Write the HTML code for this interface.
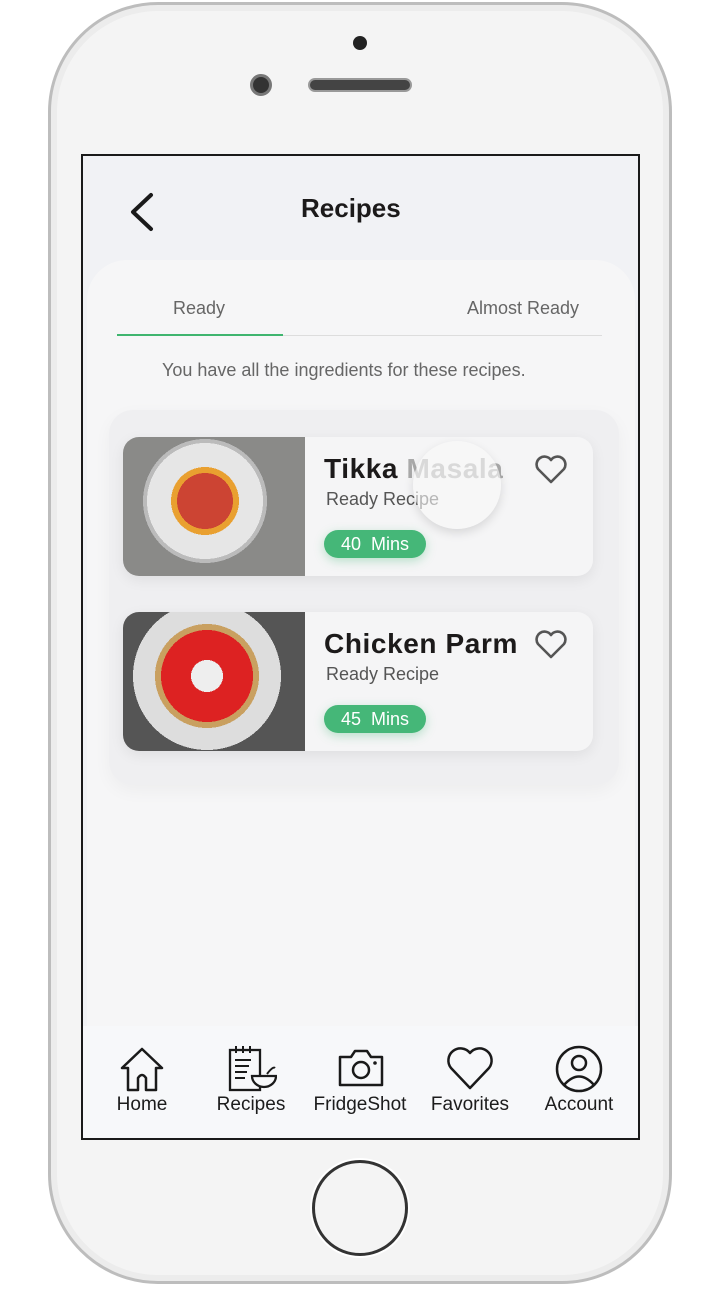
<!DOCTYPE html>
<html><head><meta charset="utf-8"><style>
*{margin:0;padding:0;box-sizing:border-box}
body{width:720px;height:1296px;background:#fff;position:relative;overflow:hidden;font-family:"Liberation Sans",sans-serif}
.phone{position:absolute;left:48px;top:2px;width:624px;height:1282px;border-radius:110px;background:#f4f4f4;border:3px solid #bdbdbd;box-shadow:inset 0 0 0 6px #ececec}
.abs{position:absolute}
.screen{position:absolute;left:81px;top:154px;width:559px;height:986px;border:2.5px solid #1a1a1a;background:#f1f2f5;overflow:hidden}
.panel{position:absolute;left:4px;top:104px;width:548px;height:780px;border-radius:40px 40px 0 0;background:#f6f6f7}
.t{position:absolute;white-space:nowrap}
.card{position:absolute;left:36px;width:470px;height:139px;border-radius:16px;background:#f5f5f6;box-shadow:0 4px 14px rgba(0,0,0,.07);overflow:hidden}
.img{position:absolute;left:0;top:0;width:182px;height:139px}
.title{font-weight:bold;font-size:28px;letter-spacing:0.6px;color:#1c1a1a;left:201px}
.sub{font-size:18px;color:#555;left:203px}
.pill{position:absolute;left:201px;width:102px;height:28px;border-radius:14px;background:#45b778;color:#fff;font-size:18px;text-align:center;line-height:28px;box-shadow:0 3px 10px rgba(69,183,120,.35)}
.nav{position:absolute;left:0;top:870px;width:556px;height:114px;background:#f7f8fa}
.lbl{position:absolute;top:68px;font-size:19px;color:#1c1c1c;text-align:center;width:110px}
</style></head><body>
<div class="phone"></div>
<div class="abs" style="left:353px;top:36px;width:14px;height:14px;border-radius:50%;background:#222"></div>
<div class="abs" style="left:250px;top:74px;width:22px;height:22px;border-radius:50%;background:#333;border:3px solid #777"></div>
<div class="abs" style="left:308px;top:78px;width:104px;height:14px;border-radius:7px;background:#444;border:2px solid #999"></div>
<div class="abs" style="left:312px;top:1160px;width:96px;height:96px;border-radius:50%;border:3px solid #333;box-shadow:0 0 0 2px #fff"></div>
<div class="screen">
 <svg class="abs" style="left:44px;top:36px" width="30" height="40"><path d="M24 3 L6 20 L24 37" fill="none" stroke="#1a1a1a" stroke-width="4" stroke-linecap="round" stroke-linejoin="round"/></svg>
 <div class="t" style="left:218px;top:37px;font-size:26px;font-weight:bold;color:#1c1a1a">Recipes</div>
 <div class="panel">
  <div class="t" style="left:86px;top:38px;font-size:18px;color:#666">Ready</div>
  <div class="t" style="left:380px;top:38px;font-size:18px;color:#666">Almost Ready</div>
  <div class="abs" style="left:30px;top:75px;width:485px;height:1px;background:#ddd"></div>
  <div class="abs" style="left:30px;top:74px;width:166px;height:2px;background:#3fb56f"></div>
  <div class="t" style="left:75px;top:100px;font-size:18px;color:#666">You have all the ingredients for these recipes.</div>
  <div class="abs" style="left:22px;top:150px;width:510px;height:375px;border-radius:24px;background:#efeff1;box-shadow:0 6px 18px rgba(0,0,0,.04)"></div>
  <div class="card" style="top:177px">
   <div class="img" style="background:radial-gradient(circle at 82px 64px,#c43 0 28px,#e9a030 28px 34px,#e6e6e6 34px 58px,#bbb 58px 62px,#8a8a88 62px)"></div>
   <div class="t title" style="top:16px">Tikka <span style="color:#aaa">Masala</span></div>
   <div class="t sub" style="top:52px">Ready Recipe</div>
   <div class="pill" style="top:93px">40 &nbsp;Mins</div>
   <svg class="abs" style="left:411px;top:18px" width="34" height="30"><path d="M17 27 L4 14 A7.5 7.5 0 0 1 17 5 A7.5 7.5 0 0 1 30 14 Z" fill="none" stroke="#555" stroke-width="2.6" stroke-linejoin="round"/></svg>
   <div class="abs" style="left:290px;top:4px;width:88px;height:88px;border-radius:50%;background:rgba(248,248,248,.6);box-shadow:0 4px 10px rgba(0,0,0,.12)"></div>
  </div>
  <div class="card" style="top:352px">
   <div class="img" style="background:radial-gradient(circle at 84px 64px,#eee 0 16px,#d22 16px 46px,#c9a060 46px 52px,#ddd 52px 74px,#555 74px)"></div>
   <div class="t title" style="top:16px">Chicken Parm</div>
   <div class="t sub" style="top:52px">Ready Recipe</div>
   <div class="pill" style="top:93px">45 &nbsp;Mins</div>
   <svg class="abs" style="left:411px;top:18px" width="34" height="30"><path d="M17 27 L4 14 A7.5 7.5 0 0 1 17 5 A7.5 7.5 0 0 1 30 14 Z" fill="none" stroke="#555" stroke-width="2.6" stroke-linejoin="round"/></svg>
  </div>
 </div>
 <div class="nav">
  <svg class="abs" style="left:35px;top:20px" width="48" height="48"><path d="M4 22 L24 3 L44 22 L38 22 L38 44 L28 44 L28 32 Q24 26 20 32 L20 44 L10 44 L10 22 Z" fill="none" stroke="#1a1a1a" stroke-width="2.5" stroke-linejoin="round"/></svg>
  <div class="lbl" style="left:4px">Home</div>
  <svg class="abs" style="left:144px;top:18px" width="50" height="50"><rect x="3" y="6" width="30" height="40" fill="none" stroke="#1a1a1a" stroke-width="2.3"/><path d="M9 2v7M16 2v7M23 2v7M8 16h16M8 22h14M8 28h12M8 34h10" stroke="#1a1a1a" stroke-width="2"/><path d="M25 32 H49 A12 11 0 0 1 25 32 Z" fill="#f7f8fa" stroke="#1a1a1a" stroke-width="2.3"/><path d="M40 30 Q46 22 48 24" fill="none" stroke="#1a1a1a" stroke-width="2"/></svg>
  <div class="lbl" style="left:113px">Recipes</div>
  <svg class="abs" style="left:254px;top:22px" width="48" height="40"><path d="M3 9 H14 L18 3 H30 L34 9 H45 V37 H3 Z" fill="none" stroke="#1a1a1a" stroke-width="2.5" stroke-linejoin="round"/><circle cx="24" cy="22" r="8" fill="none" stroke="#1a1a1a" stroke-width="2.5"/><circle cx="38" cy="15" r="1.8" fill="#1a1a1a"/></svg>
  <div class="lbl" style="left:222px">FridgeShot</div>
  <svg class="abs" style="left:362px;top:20px" width="50" height="46"><path d="M25 42 L6 22 A11 11 0 0 1 25 7 A11 11 0 0 1 44 22 Z" fill="none" stroke="#1a1a1a" stroke-width="2.5" stroke-linejoin="round"/></svg>
  <div class="lbl" style="left:332px">Favorites</div>
  <svg class="abs" style="left:471px;top:18px" width="50" height="50"><circle cx="25" cy="25" r="22" fill="none" stroke="#1a1a1a" stroke-width="2.5"/><circle cx="25" cy="19" r="7" fill="none" stroke="#1a1a1a" stroke-width="2.5"/><path d="M10 41 Q25 24 40 41" fill="none" stroke="#1a1a1a" stroke-width="2.5"/></svg>
  <div class="lbl" style="left:441px">Account</div>
 </div>
</div>
</body></html>
